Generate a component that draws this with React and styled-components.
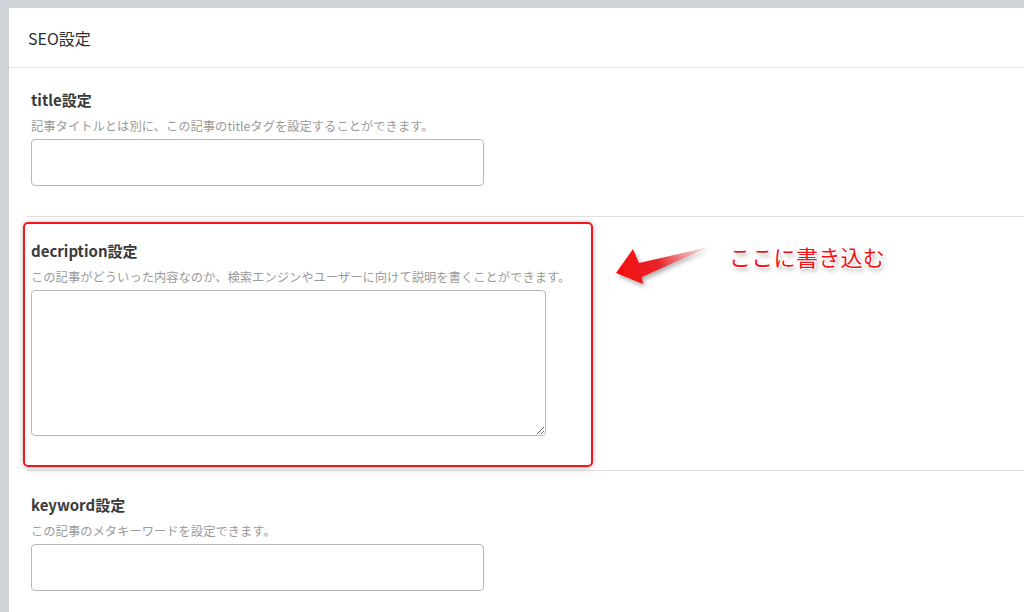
import React from "react";
import styled, { createGlobalStyle } from "styled-components";

const GlobalStyle = createGlobalStyle`
  html, body {
    margin: 0;
    padding: 0;
    background: #d0d3d8;
    overflow: hidden;
  }
  body {
    font-family: "Noto Sans CJK JP", "Noto Sans", sans-serif;
    color: #333;
  }
`;

const fields = [
  {
    id: "title",
    label: "title設定",
    help: "記事タイトルとは別に、この記事のtitleタグを設定することができます。",
    multiline: false,
  },
  {
    id: "description",
    label: "decription設定",
    help: "この記事がどういった内容なのか、検索エンジンやユーザーに向けて説明を書くことができます。",
    multiline: true,
    highlight: true,
  },
  {
    id: "keyword",
    label: "keyword設定",
    help: "この記事のメタキーワードを設定できます。",
    multiline: false,
  },
];

function Arrow() {
  return (
    <ArrowSvg width="120" height="60" viewBox="606 238 120 60">
      <defs>
        <linearGradient id="arrowFill" x1="616" y1="273" x2="709" y2="247" gradientUnits="userSpaceOnUse">
          <stop offset="0" stopColor="#f20d0d" />
          <stop offset="0.45" stopColor="#e8242a" />
          <stop offset="1" stopColor="#f3c4c8" stopOpacity="0.5" />
        </linearGradient>
        <filter id="arrowShadow" x="-20%" y="-30%" width="150%" height="170%">
          <feDropShadow dx="2" dy="3" stdDeviation="2" floodColor="#000" floodOpacity="0.3" />
        </filter>
      </defs>
      <polygon
        points="616,273 633,249 639,263 709,247 642,277 643,284"
        fill="url(#arrowFill)"
        filter="url(#arrowShadow)"
      />
    </ArrowSvg>
  );
}

function Field({ field }) {
  return (
    <Section>
      {field.highlight && <Highlight />}
      <Label htmlFor={field.id}>{field.label}</Label>
      <Help>{field.help}</Help>
      {field.multiline ? <TextArea id={field.id} /> : <TextInput id={field.id} type="text" />}
    </Section>
  );
}

export default function App() {
  return (
    <>
      <GlobalStyle />
      <Page>
        <Panel>
          <PanelHeader>SEO設定</PanelHeader>
          <PanelBody>
            {fields.map((f) => (
              <Field key={f.id} field={f} />
            ))}
          </PanelBody>
          <Arrow />
          <Callout>ここに書き込む</Callout>
        </Panel>
      </Page>
    </>
  );
}

const Page = styled.div`
  padding: 8px 0 0 9px;
  height: 604px;
`;

const Panel = styled.div`
  position: relative;
  background: #fff;
  height: 100%;
`;

const PanelHeader = styled.div`
  height: 60px;
  display: flex;
  align-items: center;
  padding-left: 19px;
  font-size: 16px;
  color: #2c2f33;
  border-bottom: 1px solid #e2e4e7;
  box-sizing: border-box;
`;

const PanelBody = styled.div`
  padding-left: 18px;
`;

const Section = styled.div`
  position: relative;
  display: flex;
  flex-direction: column;
  align-items: flex-start;
  padding: 24px 0 30px 4px;
  border-bottom: 1px solid #e0e0e0;

  &:first-child {
    padding-top: 22px;
  }

  &:last-child {
    border-bottom: none;
  }
`;

const Highlight = styled.div`
  position: absolute;
  top: 5px;
  left: -4px;
  width: 570px;
  bottom: 3px;
  border: 2px solid #f4161c;
  border-radius: 5px;
  box-sizing: border-box;
  box-shadow: 0 1px 6px rgba(0, 0, 0, 0.25);
  pointer-events: none;
`;

const Label = styled.label`
  font-size: 15px;
  font-weight: 700;
  line-height: 20px;
  color: #3a3a3a;
`;

const Help = styled.p`
  margin: 7px 0 4px;
  font-size: 12.3px;
  line-height: 18px;
  color: #9a9a9a;
`;

const TextInput = styled.input`
  width: 453px;
  height: 47px;
  box-sizing: border-box;
  border: 1px solid #b4b9be;
  border-radius: 4px;
  background: #fff;
  font: inherit;
  outline: none;
`;

const TextArea = styled.textarea`
  width: 515px;
  height: 146px;
  margin-bottom: 4px;
  box-sizing: border-box;
  border: 1px solid #b4b9be;
  border-radius: 4px;
  background: #fff;
  font: inherit;
  outline: none;
  resize: both;
`;

const ArrowSvg = styled.svg`
  position: absolute;
  left: 597px;
  top: 230px;
  overflow: visible;
`;

const Callout = styled.div`
  position: absolute;
  left: 720px;
  top: 233px;
  font-size: 22px;
  line-height: 30px;
  color: #f0141a;
  letter-spacing: 0.3px;
  text-shadow:
    -1px -1px 0 #fff, 1px -1px 0 #fff, -1px 1px 0 #fff, 1px 1px 0 #fff,
    2px 3px 4px rgba(0, 0, 0, 0.35);
`;
